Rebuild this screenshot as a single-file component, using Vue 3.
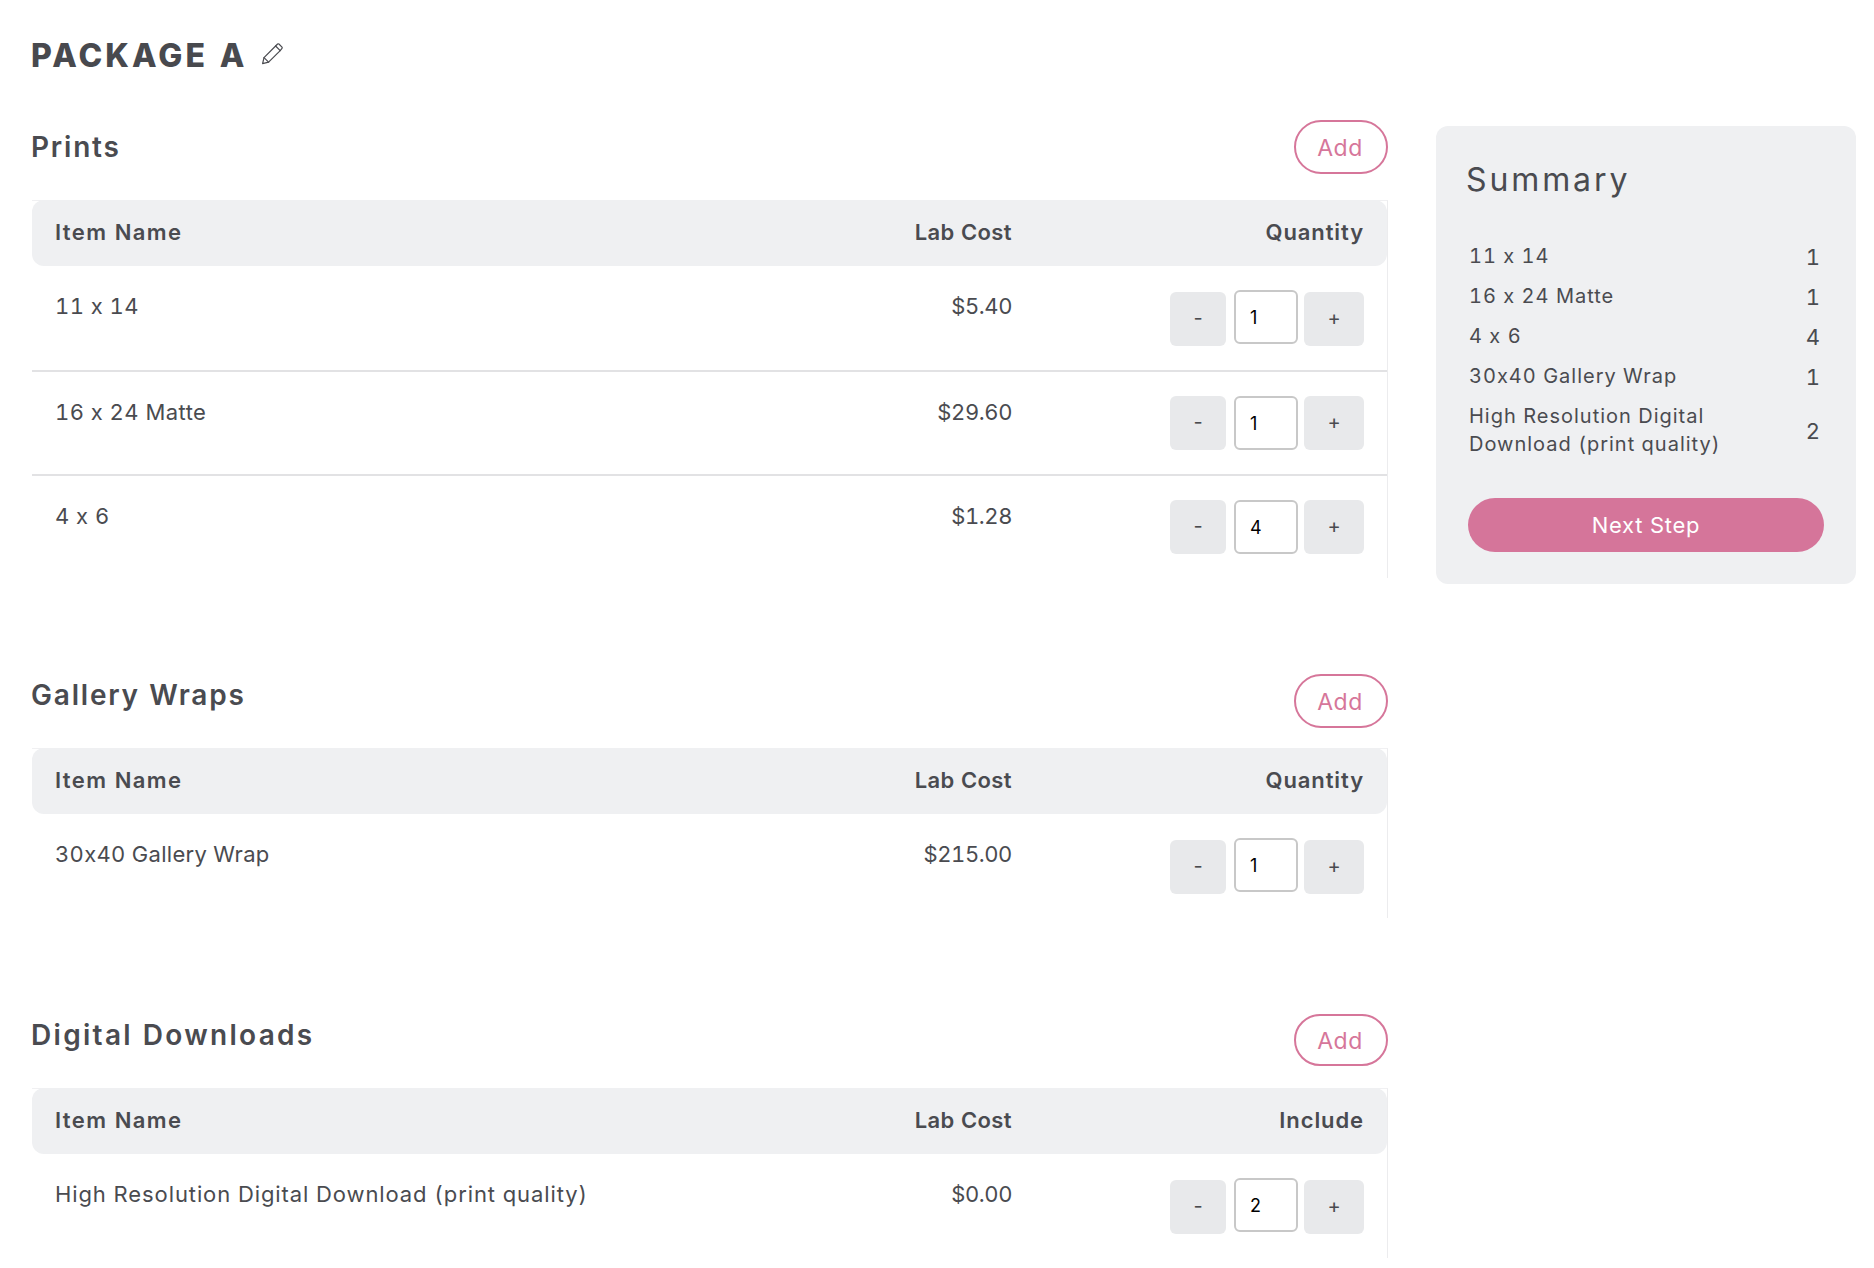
<script setup>
const sections = [
  { title: 'Prints', last: 'Quantity', cls: 'prints', items: [
    { name: '11 x 14', cost: '$5.40', qty: 1 },
    { name: '16 x 24 Matte', cost: '$29.60', qty: 1 },
    { name: '4 x 6', cost: '$1.28', qty: 4 },
  ] },
  { title: 'Gallery Wraps', last: 'Quantity', cls: 'wraps', items: [
    { name: '30x40 Gallery Wrap', cost: '$215.00', qty: 1 },
  ] },
  { title: 'Digital Downloads', last: 'Include', cls: 'digital', items: [
    { name: 'High Resolution Digital Download (print quality)', cost: '$0.00', qty: 2 },
  ] },
]
const summary = [
  { name: '11 x 14', qty: 1 },
  { name: '16 x 24 Matte', qty: 1 },
  { name: '4 x 6', qty: 4 },
  { name: '30x40 Gallery Wrap', qty: 1 },
  { name: 'High Resolution Digital Download (print quality)', qty: 2 },
]
</script>

<template>
  <div class="page">
    <header class="title-row">
      <h1>PACKAGE A</h1>
      <svg class="pencil" viewBox="0 0 24 24" fill="none" stroke="#4a4b50" stroke-width="1.2" stroke-linejoin="round" stroke-linecap="round">
        <path d="M2.6 21.6 L4 15.6 L15.6 4 L20.2 8.6 L8.6 20.2 Z" />
        <path d="M15.6 4 L17.6 2 Q18.2 1.5 18.9 2 L22 5.1 Q22.5 5.8 22 6.4 L20.2 8.6" />
        <path d="M4 15.6 L8.6 20.2" />
      </svg>
    </header>
    <div class="columns">
      <main class="main">
        <section v-for="s in sections" :key="s.title" class="section" :class="s.cls">
          <div class="section-head">
            <h2>{{ s.title }}</h2>
            <button class="add">Add</button>
          </div>
          <div class="table">
            <div class="row head">
              <div class="c-name">Item Name</div>
              <div class="c-cost">Lab Cost</div>
              <div class="c-qty">{{ s.last }}</div>
            </div>
            <div v-for="it in s.items" :key="it.name" class="row body">
              <div class="c-name">{{ it.name }}</div>
              <div class="c-cost">{{ it.cost }}</div>
              <div class="c-qty stepper">
                <button class="step minus">-</button>
                <input class="qty" :value="it.qty" />
                <button class="step plus">+</button>
              </div>
            </div>
          </div>
        </section>
      </main>
      <aside class="summary">
        <h3>Summary</h3>
        <div class="sum-list">
          <div v-for="r in summary" :key="r.name" class="sum-row">
            <span class="sum-name">{{ r.name }}</span>
            <span class="sum-qty">{{ r.qty }}</span>
          </div>
        </div>
        <button class="next">Next Step</button>
      </aside>
    </div>
  </div>
</template>

<style>
html, body { background: #fff; }
</style>

<style scoped>
.page {
  height: 1268px;
  overflow: hidden;
  box-sizing: border-box;
  padding: 36px 18px 0 32px;
  font-family: Inter, "Noto Sans", sans-serif;
  font-feature-settings: "calt" 0, "tnum" 1;
  color: #4a4b50;
}
button, input { font-feature-settings: "calt" 0; }
.title-row { display: flex; align-items: center; height: 40px; }
h1 { margin: 0 0 0 -1px; font-size: 32px; font-weight: 800; letter-spacing: 3.1px; line-height: 40px; color: #48494e; }
.pencil { width: 24px; height: 24px; margin-left: 12px; margin-top: -4px; }
.columns { display: flex; align-items: flex-start; gap: 48px; margin-top: 44px; }
.main { width: 1356px; flex: none; }
.section + .section { margin-top: 96px; }
.section-head { display: flex; justify-content: space-between; align-items: flex-end; height: 74px; }
.prints .section-head { height: 80px; }
h2 { margin: 0 0 35px -1px; font-size: 28px; font-weight: 600; line-height: 36px; letter-spacing: 1.8px; }
.digital h2 { letter-spacing: 2.3px; }
.add {
  align-self: flex-start;
  width: 94px; height: 54px; box-sizing: border-box;
  border: 2px solid #d6769a; border-radius: 27px; background: #fff;
  color: #d6769a; font: 400 23px Inter, sans-serif; letter-spacing: 0.5px; padding: 1px 2px 0 0;
}
.digital .add { height: 52px; }
.table { border-top: 1px solid #f0f0f2; border-right: 1px solid #ececee; }
.row { display: grid; grid-template-columns: 1fr 201px 375px; }
.head {
  height: 66px; box-sizing: border-box; padding-bottom: 2px; align-items: center; background: #eff0f2; border-radius: 12px;
  font-size: 22px; font-weight: 600; margin: -1px 0 2px; letter-spacing: 0.9px;
}
.c-name { padding-left: 23px; }
.c-cost { text-align: right; }
.c-qty { text-align: right; padding-right: 23px; }
.head .c-name { letter-spacing: 1.4px; }
.head .c-cost { letter-spacing: 0.4px; }
.body { height: 102px; font-size: 22px; border-bottom: 2px solid #e2e2e4; }
.body:last-child { border-bottom: 0; }
.body .c-name { padding-top: 26px; line-height: 28px; letter-spacing: 0.45px; }
.wraps .body .c-name { letter-spacing: 0.3px; }
.digital .body .c-name { letter-spacing: 0.9px; }
.body .c-cost { padding-top: 26px; line-height: 28px; letter-spacing: -0.4px; }
.head + .body .c-name, .head + .body .c-cost { padding-top: 24px; }
.stepper { display: flex; justify-content: flex-end; align-items: flex-start; padding-top: 24px; }
.step {
  height: 54px; border: 0; border-radius: 6px; background: #e8e9eb;
  color: #4a4b50; font: 400 20px Inter, sans-serif; padding: 0 0 3px;
}
.minus { width: 56px; }
.plus { width: 60px; }
.qty {
  width: 64px; height: 54px; box-sizing: border-box; margin: 0 6px 0 8px;
  border: 2px solid #c8c8c8; border-radius: 6px; background: #fff;
  padding: 0 0 0 14px; font: 400 18px Inter, sans-serif; color: #000;
}
.head + .body .qty { margin-top: -2px; }
.summary {
  width: 420px; box-sizing: border-box; flex: none; margin-top: 6px; height: 458px;
  background: #eff0f2; border-radius: 12px; padding: 34px 32px 0 30px;
}
h3 { margin: 0; font-size: 32px; font-weight: 400; line-height: 40px; letter-spacing: 2.9px; }
.sum-list { margin-top: 36px; padding-left: 3px; }
.sum-row { display: flex; align-items: center; justify-content: space-between; font-size: 20px; line-height: 28px; padding: 6px 0; letter-spacing: 1px; }
.sum-name { width: 270px; }
.sum-qty { width: 24px; text-align: center; font-size: 22px; line-height: 26px; padding-top: 2px; margin-right: -1px; letter-spacing: 0; }
.next {
  display: block; width: 356px; height: 54px; margin: 34px 0 0 2px; border: 0; border-radius: 27px;
  background: #d5759a; color: #fff; font: 400 22px Inter, sans-serif; letter-spacing: 0.7px; padding: 0;
}
</style>
